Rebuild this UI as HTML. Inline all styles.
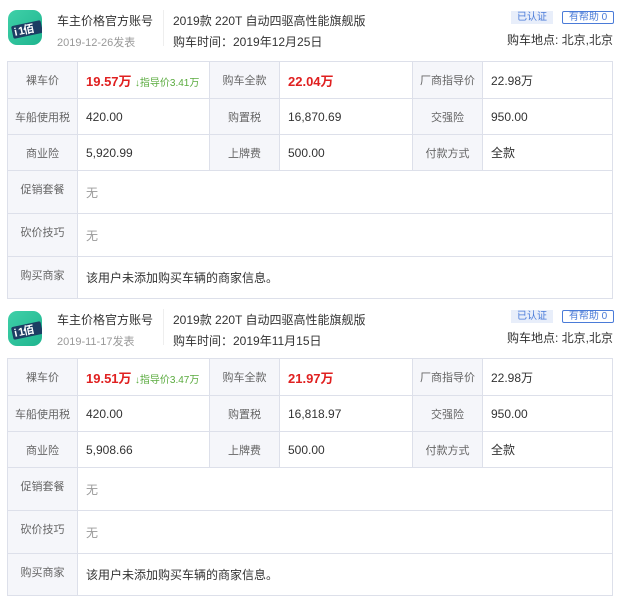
<!DOCTYPE html>
<html><head><meta charset="utf-8"><style>
*{margin:0;padding:0;box-sizing:border-box}
body{width:620px;height:598px;background:#fff;font-family:"Liberation Sans","Noto Sans CJK SC",sans-serif;color:#333;position:relative;overflow:hidden}
.blk{position:absolute;left:0;width:620px;height:297px}
.logo{position:absolute;left:8px;top:10px;width:34px;height:35px;border-radius:9px;background:linear-gradient(135deg,#3fd0a8,#1fb58f);overflow:hidden}
.logo .s{position:absolute;left:4px;top:13px;width:30px;height:13px;background:#1c3d63;transform:rotate(-12deg);border-radius:2px}
.logo .t{position:absolute;left:6px;top:12px;color:#fff;font-size:11px;font-weight:bold;transform:rotate(-12deg);letter-spacing:-1px}
.abs{position:absolute;white-space:nowrap}
.name{left:57px;top:12px;font-size:12px;color:#333}
.date{left:57px;top:34px;font-size:11px;color:#999}
.div{left:163px;top:10px;width:1px;height:36px;background:#eee}
.model{left:173px;top:12px;font-size:12px;color:#333}
.ptime{left:173px;top:33px;font-size:12px;color:#333}
.b1{left:511px;top:11px;width:42px;height:13px;background:#e8eefa;color:#4a7bd8;font-size:10px;text-align:center;line-height:13px}
.b2{left:562px;top:11px;width:52px;height:13px;border:1px solid #4a7bd8;border-radius:2px;color:#4a7bd8;font-size:10px;text-align:center;line-height:11px}
.loc{right:7px;top:31px;font-size:12px;color:#333}
table{position:absolute;left:7px;top:61px;width:606px;border-collapse:collapse;font-size:12px;table-layout:fixed}
td{border:1px solid #dde0ea;padding:0 8px;height:36px;white-space:nowrap;overflow:hidden}
td.l{background:#f5f6fa;text-align:center;color:#666;padding:0;font-size:11px}
.red{color:#e02020;font-weight:bold;font-size:13px}
.grn{color:#5aab3e;font-size:10px}
.gray{color:#999}
</style></head><body>

<div class="blk" style="top:0">
<div class="logo"><div class="s"></div><div class="t">i 1佰</div></div>
<div class="abs name">车主价格官方账号</div>
<div class="abs date">2019-12-26发表</div>
<div class="abs div"></div>
<div class="abs model">2019款 220T 自动四驱高性能旗舰版</div>
<div class="abs ptime">购车时间：2019年12月25日</div>
<div class="abs b1">已认证</div>
<div class="abs b2">有帮助 0</div>
<div class="abs loc">购车地点: 北京,北京</div>
<table>
<colgroup><col style="width:70px"><col style="width:132px"><col style="width:70px"><col style="width:133px"><col style="width:70px"><col></colgroup>
<tr style="height:37px"><td class="l">裸车价</td><td><span class="red">19.57万</span> <span class="grn">↓指导价3.41万</span></td><td class="l">购车全款</td><td><span class="red">22.04万</span></td><td class="l">厂商指导价</td><td>22.98万</td></tr>
<tr style="height:36px"><td class="l">车船使用税</td><td>420.00</td><td class="l">购置税</td><td>16,870.69</td><td class="l">交强险</td><td>950.00</td></tr>
<tr style="height:35px"><td class="l">商业险</td><td>5,920.99</td><td class="l">上牌费</td><td>500.00</td><td class="l">付款方式</td><td>全款</td></tr>
<tr style="height:43px"><td class="l" style="vertical-align:top;padding-top:10px">促销套餐</td><td colspan="5" class="gray">无</td></tr>
<tr style="height:43px"><td class="l" style="vertical-align:top;padding-top:10px">砍价技巧</td><td colspan="5" class="gray">无</td></tr>
<tr style="height:42px"><td class="l" style="vertical-align:top;padding-top:10px">购买商家</td><td colspan="5">该用户未添加购买车辆的商家信息。</td></tr>
</table>
</div>

<div class="blk" style="top:297px">
<div class="logo" style="top:14px"><div class="s"></div><div class="t">i 1佰</div></div>
<div class="abs name" style="top:14px">车主价格官方账号</div>
<div class="abs date" style="top:36px">2019-11-17发表</div>
<div class="abs div" style="top:12px"></div>
<div class="abs model" style="top:14px">2019款 220T 自动四驱高性能旗舰版</div>
<div class="abs ptime" style="top:35px">购车时间：2019年11月15日</div>
<div class="abs b1" style="top:13px">已认证</div>
<div class="abs b2" style="top:13px">有帮助 0</div>
<div class="abs loc" style="top:32px">购车地点: 北京,北京</div>
<table>
<colgroup><col style="width:70px"><col style="width:132px"><col style="width:70px"><col style="width:133px"><col style="width:70px"><col></colgroup>
<tr style="height:37px"><td class="l">裸车价</td><td><span class="red">19.51万</span> <span class="grn">↓指导价3.47万</span></td><td class="l">购车全款</td><td><span class="red">21.97万</span></td><td class="l">厂商指导价</td><td>22.98万</td></tr>
<tr style="height:36px"><td class="l">车船使用税</td><td>420.00</td><td class="l">购置税</td><td>16,818.97</td><td class="l">交强险</td><td>950.00</td></tr>
<tr style="height:35px"><td class="l">商业险</td><td>5,908.66</td><td class="l">上牌费</td><td>500.00</td><td class="l">付款方式</td><td>全款</td></tr>
<tr style="height:43px"><td class="l" style="vertical-align:top;padding-top:10px">促销套餐</td><td colspan="5" class="gray">无</td></tr>
<tr style="height:43px"><td class="l" style="vertical-align:top;padding-top:10px">砍价技巧</td><td colspan="5" class="gray">无</td></tr>
<tr style="height:42px"><td class="l" style="vertical-align:top;padding-top:10px">购买商家</td><td colspan="5">该用户未添加购买车辆的商家信息。</td></tr>
</table>
</div>
</body></html>
